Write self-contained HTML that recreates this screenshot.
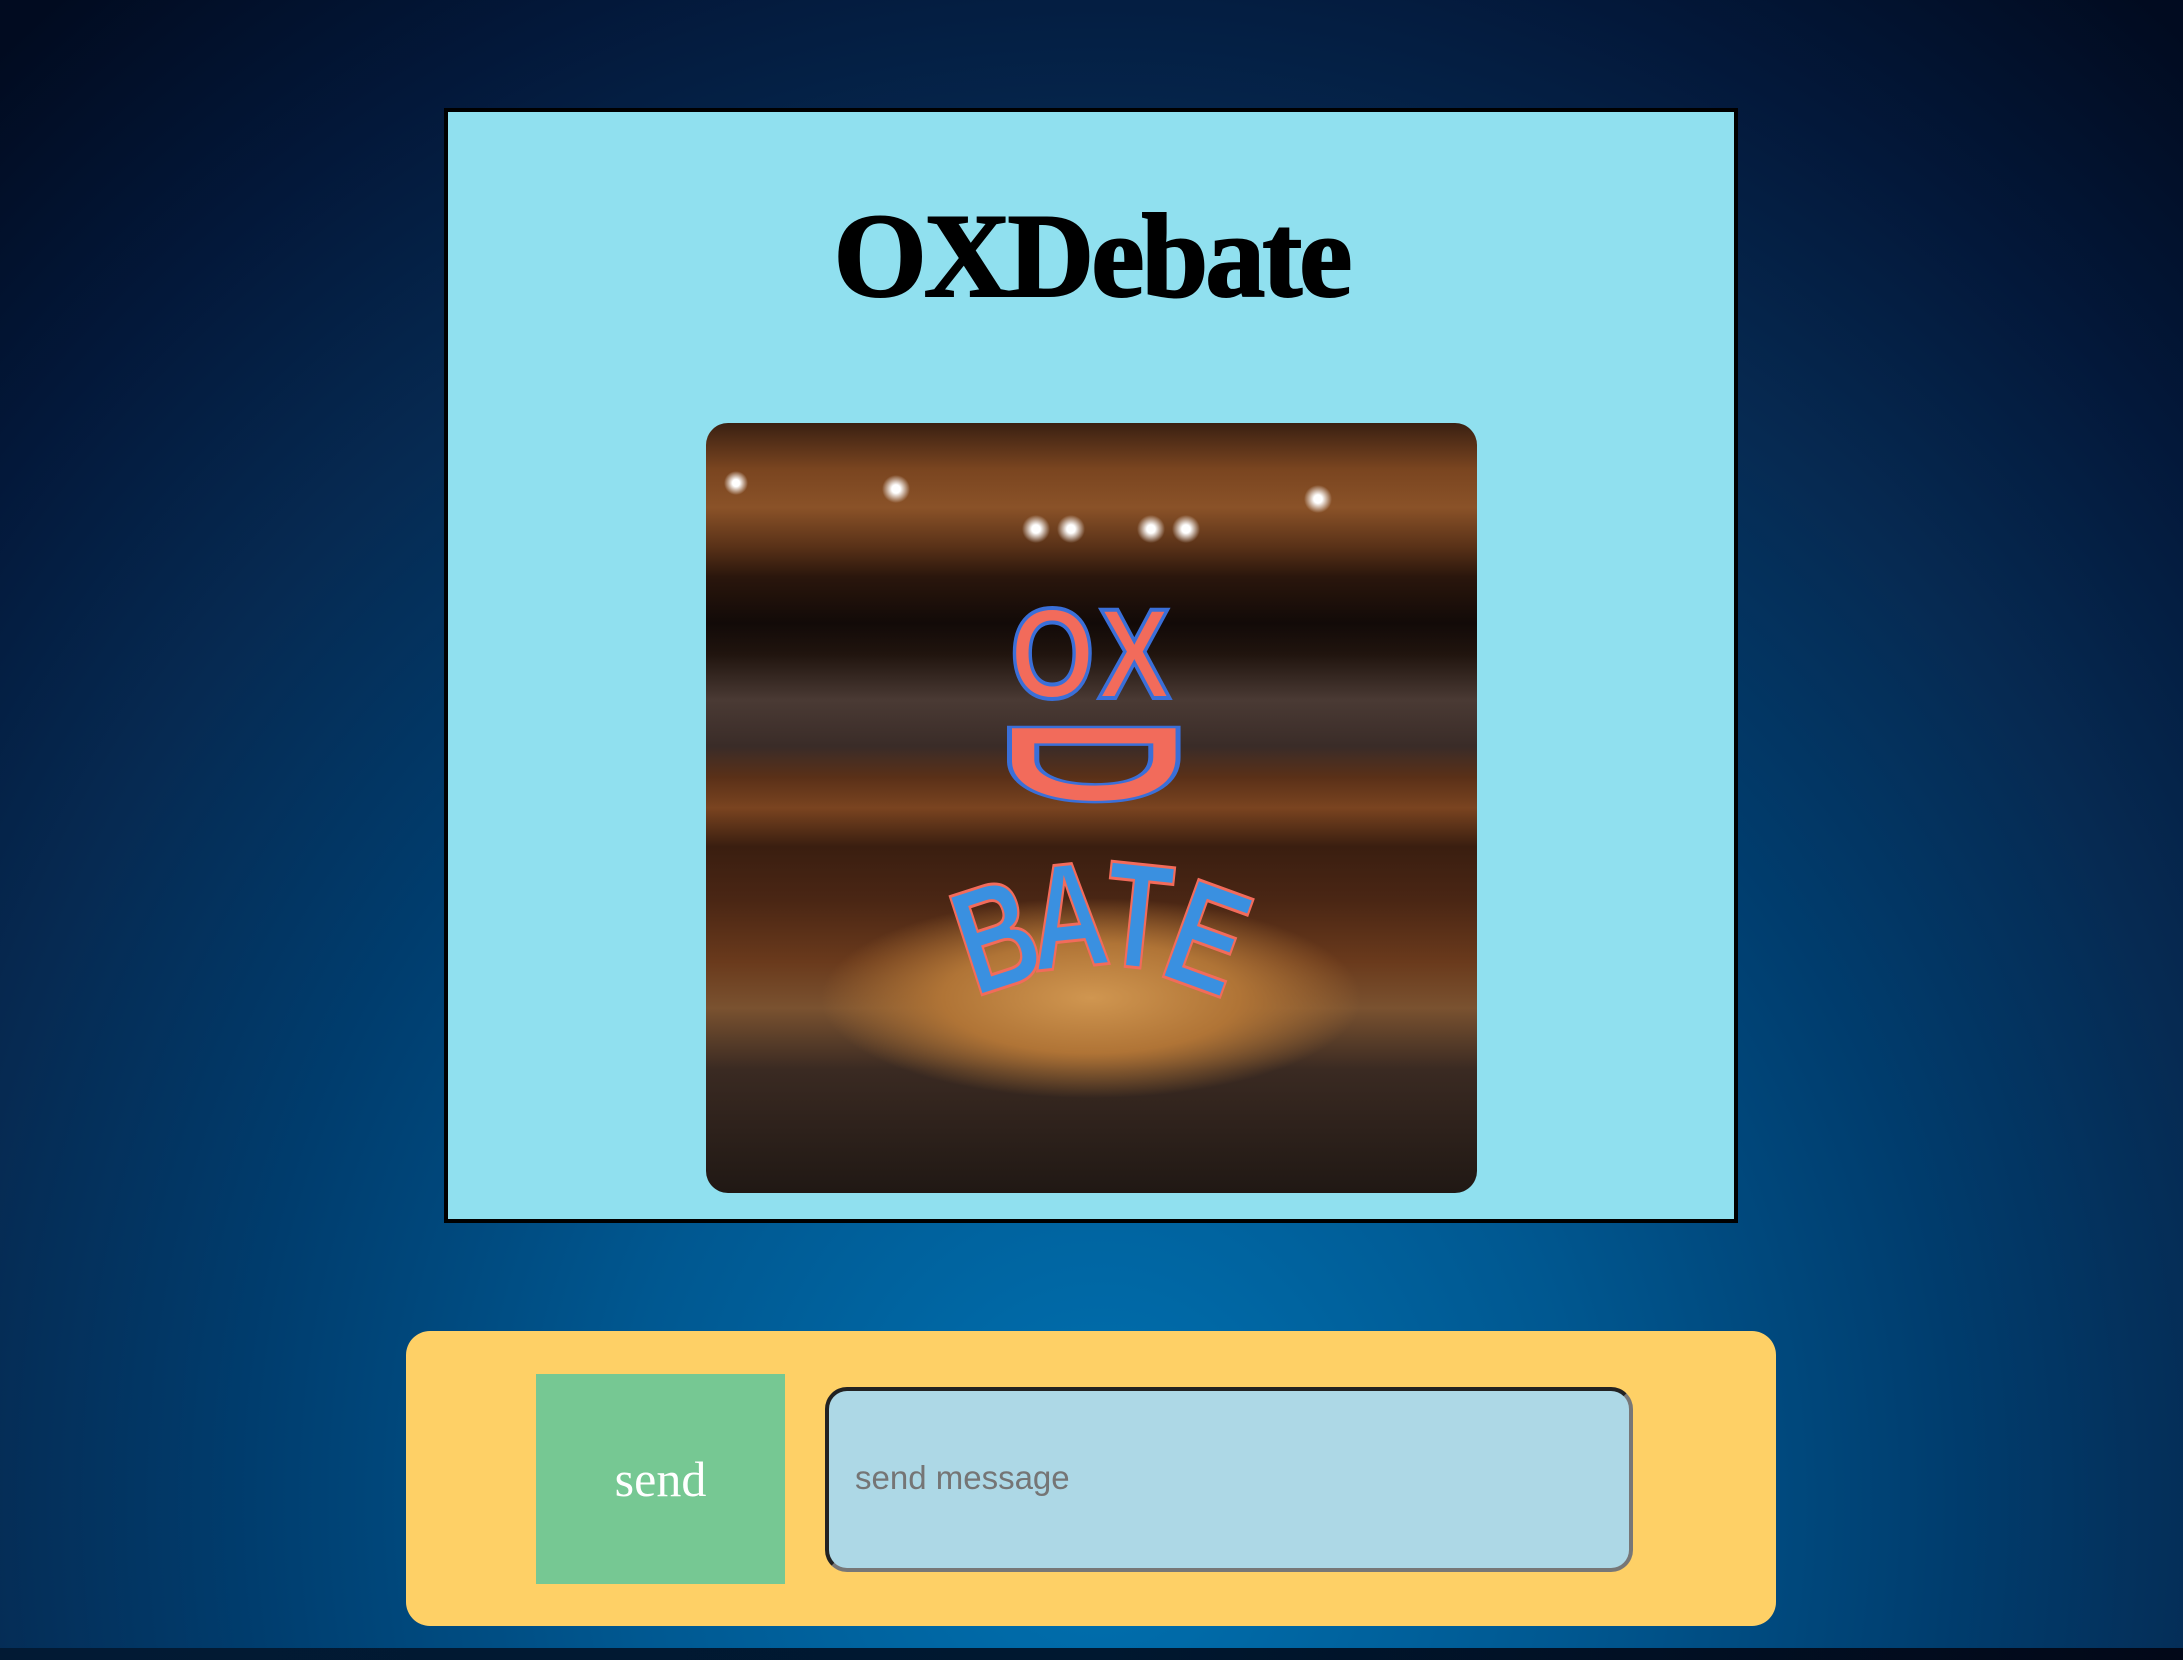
<!DOCTYPE html>
<html><head><meta charset="utf-8">
<style>
html,body{margin:0;padding:0;}
body{width:2183px;height:1660px;position:relative;overflow:hidden;
background:radial-gradient(ellipse 1700px 1900px at 1100px 1500px,#0072b2 0%,#005891 28%,#003d6e 50%,#062a52 68%,#03183a 84%,#010b20 100%);}
.card{position:absolute;left:444px;top:108px;width:1286px;height:1107px;background:#90e0ef;border:4px solid #000;}
.title{position:absolute;left:0;right:0;top:196px;text-align:center;font-family:"Liberation Serif",serif;font-weight:bold;font-size:120px;letter-spacing:-3px;line-height:1;color:#000;-webkit-text-stroke:2px #000;}
.img{position:absolute;left:706px;top:423px;width:771px;height:770px;border-radius:22px;overflow:hidden;
background:
radial-gradient(circle 14px at 190px 66px,#fff 30%,rgba(255,220,170,0) 100%),
radial-gradient(circle 14px at 330px 106px,#fff 30%,rgba(255,220,170,0) 100%),
radial-gradient(circle 14px at 365px 106px,#fff 30%,rgba(255,220,170,0) 100%),
radial-gradient(circle 14px at 445px 106px,#fff 30%,rgba(255,220,170,0) 100%),
radial-gradient(circle 14px at 480px 106px,#fff 30%,rgba(255,220,170,0) 100%),
radial-gradient(circle 14px at 612px 76px,#fff 30%,rgba(255,220,170,0) 100%),
radial-gradient(circle 12px at 30px 60px,#fff 30%,rgba(255,220,170,0) 100%),
radial-gradient(ellipse 270px 100px at 385px 575px,#d09650 0%,#b07436 55%,rgba(120,70,30,0) 100%),
linear-gradient(180deg,#3a2012 0%,#7a4520 6%,#8a5228 11%,#5a3218 16%,#2a160c 20%,#120a08 26%,#20140e 30%,#4a3a34 36%,#3a2c28 42%,#5a3018 46%,#7a4420 50%,#3a1e10 55%,#4a2614 62%,#6a3a1c 70%,#7a5230 76%,#3a2a22 84%,#201814 100%);}
.c{position:absolute;width:0;height:0;}
.c span{position:absolute;left:0;top:0;white-space:nowrap;font-family:"Liberation Sans",sans-serif;font-weight:bold;line-height:1;}
.ox span{font-size:128px;color:#f26b5b;-webkit-text-stroke:4px #3a6fd8;transform:translate(-50%,-50%) scaleX(0.85);letter-spacing:4px;}
.d span{font-size:245px;color:#f26b5b;-webkit-text-stroke:5px #3a6fd8;transform:translate(-50%,-50%) rotate(90deg) scale(0.5,1);}
.b span{font-size:150px;color:#3a90e0;-webkit-text-stroke:3px #f26b5b;}
</style></head><body>
<div class="card"></div>
<div class="title">OXDebate</div>
<div class="img">
<div class="c ox" style="left:386px;top:232px"><span>OX</span></div>
<div class="c d" style="left:388px;top:340px"><span>D</span></div>
<div class="c b" style="left:290px;top:520px"><span style="transform:translate(-50%,-55%) rotate(-18deg) scaleX(0.72)">B</span></div>
<div class="c b" style="left:362px;top:500px"><span style="transform:translate(-50%,-55%) rotate(-6deg) scaleX(0.72)">A</span></div>
<div class="c b" style="left:432px;top:500px"><span style="transform:translate(-50%,-55%) rotate(6deg) scaleX(0.72)">T</span></div>
<div class="c b" style="left:502px;top:522px"><span style="transform:translate(-50%,-55%) rotate(20deg) scaleX(0.72)">E</span></div>
</div>
<div style="position:absolute;left:406px;top:1331px;width:1370px;height:295px;background:#fed066;border-radius:24px;"></div>
<div style="position:absolute;left:536px;top:1374px;width:249px;height:210px;background:#76c893;color:#fff;font-family:'Liberation Serif',serif;font-size:50px;display:flex;align-items:center;justify-content:center;">send</div>
<div style="position:absolute;left:825px;top:1387px;width:800px;height:177px;background:#add8e6;border:4px solid #222;border-bottom-color:#777;border-right-color:#777;border-radius:22px;font-family:'Liberation Sans',sans-serif;font-size:33px;color:#757575;"><span style="position:absolute;left:26px;top:68px;">send message</span></div>
<div style="position:absolute;left:0;top:1648px;width:2183px;height:12px;background:linear-gradient(90deg,#021a34,#001830 50%,#020818);"></div>
</body></html>
